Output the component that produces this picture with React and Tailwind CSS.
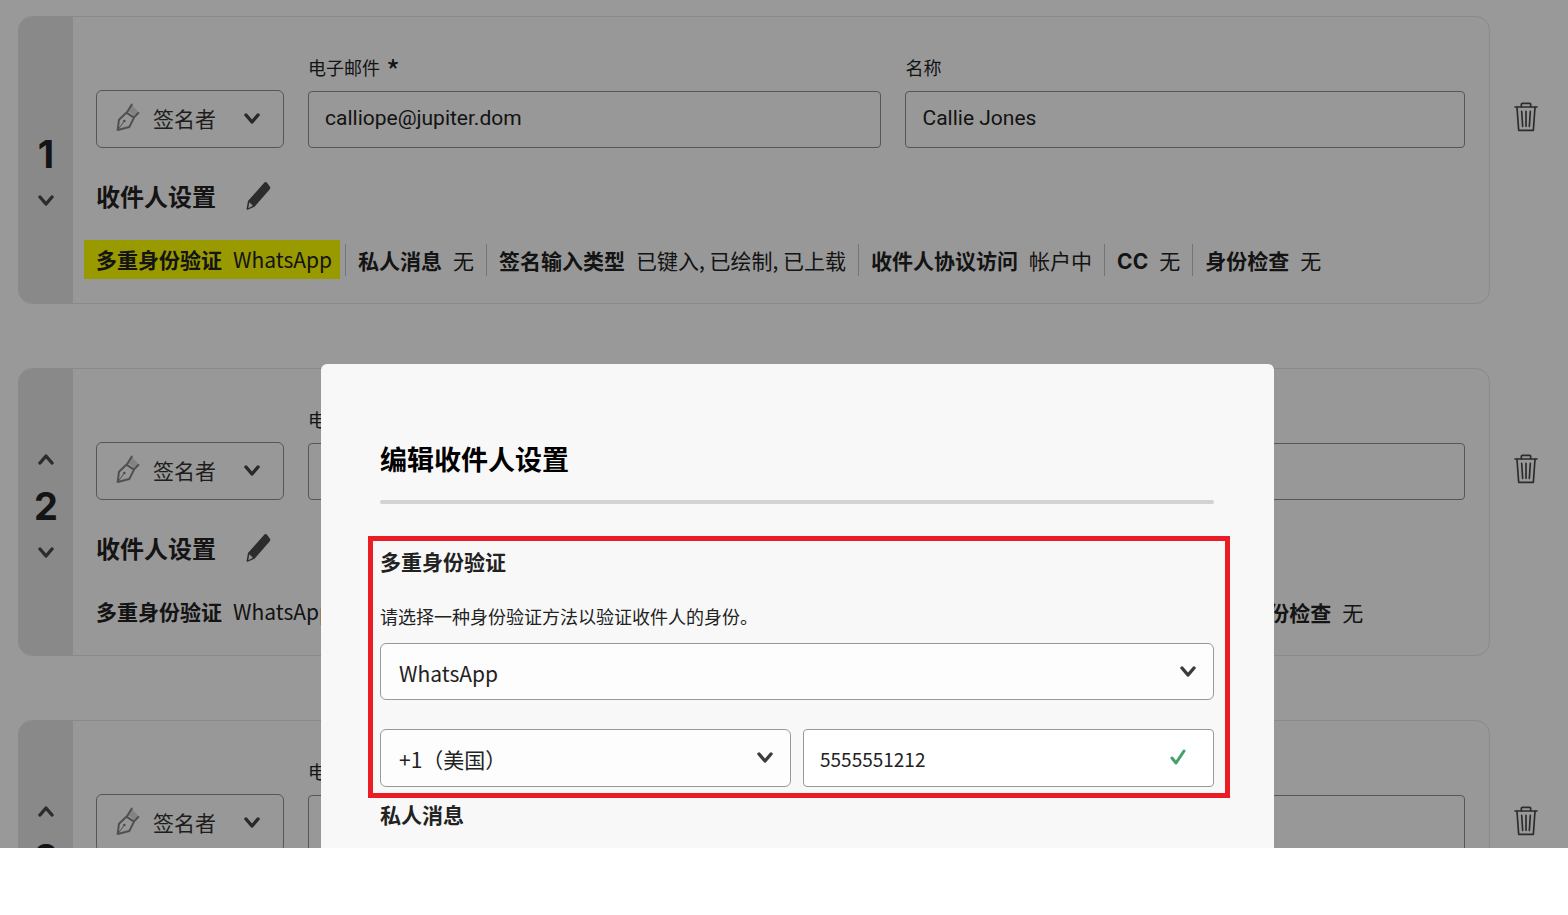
import { useState } from "react";

const signers = [
  {
    id: 1,
    email: "calliope@jupiter.dom",
    name: "Callie Jones",
    highlighted: true,
    access: "帐户中",
  },
  { id: 2, email: "", name: "", highlighted: false, access: "不在帐户中" },
  { id: 3, email: "", name: "", highlighted: false, access: "不在帐户中" },
];

function Chevron({ up, className = "" }) {
  return (
    <svg
      className={"pointer-events-none block h-3 w-4 " + className}
      viewBox="0 0 16 12"
      fill="none"
      stroke="currentColor"
      strokeWidth="3.4"
      strokeLinecap="round"
      strokeLinejoin="round"
    >
      <path d={up ? "M2 10 L8 3 L14 10" : "M2 2 L8 9 L14 2"} />
    </svg>
  );
}

function PenIcon() {
  return (
    <svg
      className="pointer-events-none absolute top-[13px] left-5 h-[29px] w-6 text-[#858585]"
      viewBox="78 54 72 87"
      fill="none"
      stroke="currentColor"
      strokeWidth="6"
      strokeLinecap="round"
      strokeLinejoin="round"
    >
      <path d="M126 59 L114 78 L134 94 L147 83" fill="#dcdcdc" stroke="none" />
      <path d="M83 135 L87 104 L109 83 L132 98 L118 126 Z" />
      <path d="M125 59 L110 83 M145 84 L132 97" />
      <path d="M84 134 L101 111" strokeWidth="3" />
      <circle cx="103" cy="108" r="4" fill="currentColor" stroke="none" />
    </svg>
  );
}

function PencilIcon() {
  return (
    <svg className="block h-[30px] w-[25px]" viewBox="736 546 76 90">
      <path
        d="M742 606 L790 552 Q795 546 800 551 L808 561 Q812 567 807 572 L762 624 L741 633 Q737 634 738 629 Z"
        fill="#4a4a4a"
      />
      <path d="M746 610 L757 621 L743 628 Z" fill="#f4f4f4" />
    </svg>
  );
}

function TrashIcon() {
  return (
    <svg
      className="block h-[30px] w-6"
      viewBox="1338 306 72 90"
      fill="none"
      stroke="#4a4a4a"
      strokeWidth="5"
      strokeLinecap="round"
      strokeLinejoin="round"
    >
      <path d="M1341 321 H1407" />
      <path d="M1360 320 V313 Q1360 310 1363 310 H1385 Q1388 310 1388 313 V320" />
      <path d="M1347 322 L1352 391 H1396 L1401 322" />
      <path d="M1361 334 L1364 379 M1374 334 V379 M1387 334 L1384 379" />
    </svg>
  );
}

function Detail({ label, value }) {
  return (
    <div className="flex h-8 items-baseline gap-[11px] border-l border-[#c4c4c4] px-3 leading-8">
      <dt className="font-['Inter','Noto_Sans_CJK_SC',sans-serif] font-bold">
        {label}
      </dt>
      <dd>{value}</dd>
    </div>
  );
}

function SignerCard({ signer, first }) {
  const [email, setEmail] = useState(signer.email);
  const [name, setName] = useState(signer.name);

  return (
    <li className="flex items-start gap-6">
      <section className="flex min-w-0 flex-1 overflow-hidden rounded-[14px] border border-[#e6e6e6] bg-[#fefefe]">
        <div className="flex w-[54px] shrink-0 flex-col items-center bg-[#e5e5e5] pt-[84px] text-[#4a4a4a]">
          <button
            type="button"
            aria-label="上移"
            className={first ? "invisible" : ""}
          >
            <Chevron up />
          </button>
          <span className="my-[21px] font-[Inter,sans-serif] text-[38px] leading-10 font-bold text-[#222]">
            {signer.id}
          </span>
          <button type="button" aria-label="下移">
            <Chevron />
          </button>
        </div>

        <div className="min-w-0 flex-1 pt-[38px] pr-6 pb-6 pl-[23px]">
          <div className="grid grid-cols-[188px_1.025fr_1fr] items-end gap-6">
            <div className="relative">
              <PenIcon />
              <select
                aria-label="角色"
                className="h-[58px] w-full appearance-none rounded-md border border-[#8f8f8f] bg-transparent pl-14 text-[21px] text-[#333]"
              >
                <option>签名者</option>
                <option>审批者</option>
              </select>
              <Chevron className="absolute top-[23px] right-6 text-[#444]" />
            </div>
            <div>
              <label
                htmlFor={`email-${signer.id}`}
                className="mb-3 block h-6 text-lg leading-6"
              >
                电子邮件
                <span className="ml-1.5 align-[-8px] text-[30px] leading-none">*</span>
              </label>
              <input
                id={`email-${signer.id}`}
                type="text"
                value={email}
                onChange={(e) => setEmail(e.target.value)}
                className="block h-[57px] w-full rounded-sm border border-[#8f8f8f] bg-transparent px-4 pb-1 font-[Roboto,sans-serif] text-[21px]"
              />
            </div>
            <div>
              <label
                htmlFor={`name-${signer.id}`}
                className="mb-3 block h-6 text-lg leading-6"
              >
                名称
              </label>
              <input
                id={`name-${signer.id}`}
                type="text"
                value={name}
                onChange={(e) => setName(e.target.value)}
                className="block h-[57px] w-full rounded-sm border border-[#8f8f8f] bg-transparent px-4 pb-1 font-[Roboto,sans-serif] text-[21px]"
              />
            </div>
          </div>

          <div className="mt-8 flex items-center gap-[30px]">
            <h2 className="text-2xl leading-8 font-bold">收件人设置</h2>
            <button type="button" aria-label="编辑收件人设置">
              <PencilIcon />
            </button>
          </div>

          <dl className="mt-7 flex items-center text-[21px] whitespace-nowrap">
            <div
              className={
                "mr-[5px] -ml-3 flex h-[39px] items-center gap-[11px] pr-2 pl-3 " +
                (signer.highlighted ? "bg-[#ff0]" : "")
              }
            >
              <dt className="font-bold">多重身份验证</dt>
              <dd>WhatsApp</dd>
            </div>
            <Detail label="私人消息" value="无" />
            <Detail label="签名输入类型" value="已键入, 已绘制, 已上载" />
            <Detail label="收件人协议访问" value={signer.access} />
            <Detail label="CC" value="无" />
            <Detail label="身份检查" value="无" />
          </dl>
        </div>
      </section>

      <button type="button" aria-label="删除收件人" className="mt-[86px]">
        <TrashIcon />
      </button>
    </li>
  );
}

function SettingsDialog() {
  const [phone, setPhone] = useState("5555551212");

  return (
    <div
      role="dialog"
      aria-labelledby="dialog-title"
      className="min-h-full rounded-t-md bg-[#f8f8f8] pt-[75px] pr-[60px] pl-[59px]"
    >
      <h1 id="dialog-title" className="text-[27px] leading-10 font-bold text-black">
        编辑收件人设置
      </h1>
      <hr className="mt-[21px] h-1 rounded-full border-0 bg-[#d3d3d3]" />

      <div className="mt-8 -mr-4 -ml-3 border-[5px] border-[#ea1c24] pt-1 pr-[11px] pb-1.5 pl-[7px]">
        <h2 className="text-[21px] leading-8 font-bold">多重身份验证</h2>
        <label htmlFor="method" className="mt-[27px] block text-lg leading-6">
          请选择一种身份验证方法以验证收件人的身份。
        </label>
        <div className="relative mt-[15px]">
          <select
            id="method"
            className="block h-[57px] w-full appearance-none rounded-md border border-[#999] bg-[#fdfdfd] pt-1 pl-[18px] text-[21px]"
          >
            <option>WhatsApp</option>
            <option>电话</option>
          </select>
          <Chevron className="absolute top-[23px] right-[18px] text-[#3c3c3c]" />
        </div>
        <div className="mt-[29px] flex gap-3">
          <div className="relative flex-1">
            <select
              aria-label="国家/地区代码"
              className="block h-[58px] w-full appearance-none rounded-md border border-[#999] bg-[#fdfdfd] pt-1 pl-[18px] text-[21px]"
            >
              <option>+1（美国）</option>
              <option>+86（中国）</option>
            </select>
            <Chevron className="absolute top-[23px] right-[18px] text-[#3c3c3c]" />
          </div>
          <div className="relative flex-1">
            <input
              type="tel"
              aria-label="电话号码"
              value={phone}
              onChange={(e) => setPhone(e.target.value)}
              className="block h-[58px] w-full rounded-sm border border-[#999] bg-white px-4 text-[19px]"
            />
            <svg
              className="absolute top-5 right-7 h-[17px] w-4"
              viewBox="0 0 16 17"
              fill="none"
              stroke="#45a06e"
              strokeWidth="3"
              strokeLinecap="round"
              strokeLinejoin="round"
            >
              <path d="M2 9 L6 14 L14 2" />
            </svg>
          </div>
        </div>
      </div>

      <h2 className="text-[21px] leading-8 font-bold">私人消息</h2>
    </div>
  );
}

export default function App() {
  return (
    <div className="h-screen bg-white pb-[67px] font-['Noto_Sans_CJK_SC',sans-serif] text-[#222]">
      <main className="relative h-full overflow-hidden">
        <ul className="flex flex-col gap-16 bg-white pt-4 pr-[30px] pl-[18px]">
          {signers.map((signer, index) => (
            <SignerCard key={signer.id} signer={signer} first={index === 0} />
          ))}
        </ul>
        <div className="absolute inset-0 bg-black/40 pt-[364px] pr-[294px] pl-[321px]">
          <SettingsDialog />
        </div>
      </main>
    </div>
  );
}
